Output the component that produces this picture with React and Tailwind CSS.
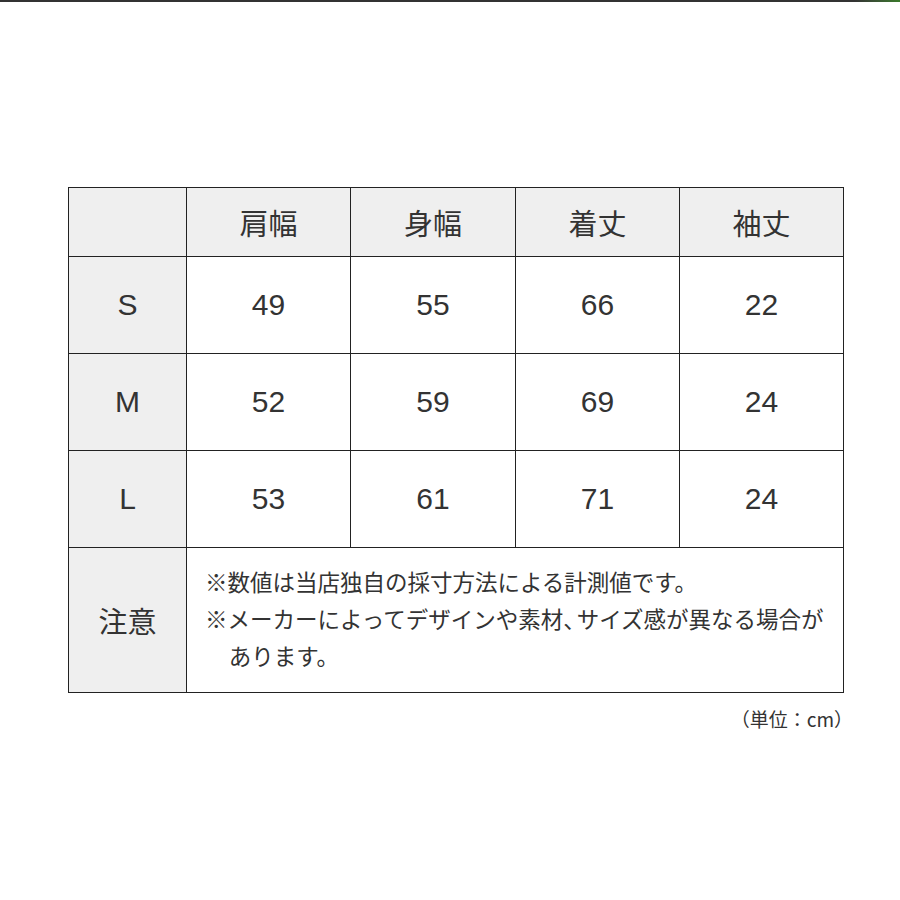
export default function App() {
  const font = { fontFamily: '"Liberation Sans", "Noto Sans CJK JP", sans-serif' };
  const jp = { fontFamily: '"Noto Sans CJK JP", sans-serif' };
  const rows = [
    ["S", "49", "55", "66", "22"],
    ["M", "52", "59", "69", "24"],
    ["L", "53", "61", "71", "24"],
  ];
  const heads = ["肩幅", "身幅", "着丈", "袖丈"];
  return (
    <div className="w-[900px] h-[900px] bg-white text-[#333]" style={font}>
      <div className="h-[2px] w-full bg-gradient-to-r from-[#333] via-[#333] via-95% to-[#3a7a2a]"></div>
      <div className="pt-[185px] pl-[68px]">
        <table className="table-fixed border-collapse w-[775px]">
          <colgroup>
            <col className="w-[118px]" />
            <col className="w-[164px]" />
            <col className="w-[165px]" />
            <col className="w-[164px]" />
            <col className="w-[164px]" />
          </colgroup>
          <tbody>
            <tr className="h-[69px]">
              <td className="border-[1.5px] border-[#222] bg-[#efefef]"></td>
              {heads.map((h) => (
                <td key={h} className="border-[1.5px] border-[#222] bg-[#efefef] text-center text-[29px] leading-none" style={jp}>
                  {h}
                </td>
              ))}
            </tr>
            {rows.map((r) => (
              <tr key={r[0]} className="h-[97px]">
                <td className="border-[1.5px] border-[#222] bg-[#efefef] text-center text-[30px] leading-none">{r[0]}</td>
                {r.slice(1).map((v, i) => (
                  <td key={i} className="border-[1.5px] border-[#222] bg-white text-center text-[30px] leading-none">
                    {v}
                  </td>
                ))}
              </tr>
            ))}
            <tr className="h-[145px]">
              <td className="border-[1.5px] border-[#222] bg-[#efefef] text-center text-[29px] leading-none" style={jp}>
                注意
              </td>
              <td colSpan={4} className="border-[1.5px] border-[#222] bg-white pl-[18px] pb-[4px] align-middle text-[22.5px] leading-[37px] whitespace-nowrap" style={jp}>
                <div>※数値は当店独自の採寸方法による計測値です。</div>
                <div className="pl-[1.05em] -indent-[1.05em]">
                  ※メーカーによってデザインや素材<span className="mr-[-0.4em]">、</span>サイズ感が異なる場合が
                  <br />
                  あります。
                </div>
              </td>
            </tr>
          </tbody>
        </table>
        <div className="w-[785px] text-right text-[19px] mt-[12px]" style={jp}>
          （単位：cm）
        </div>
      </div>
    </div>
  );
}
